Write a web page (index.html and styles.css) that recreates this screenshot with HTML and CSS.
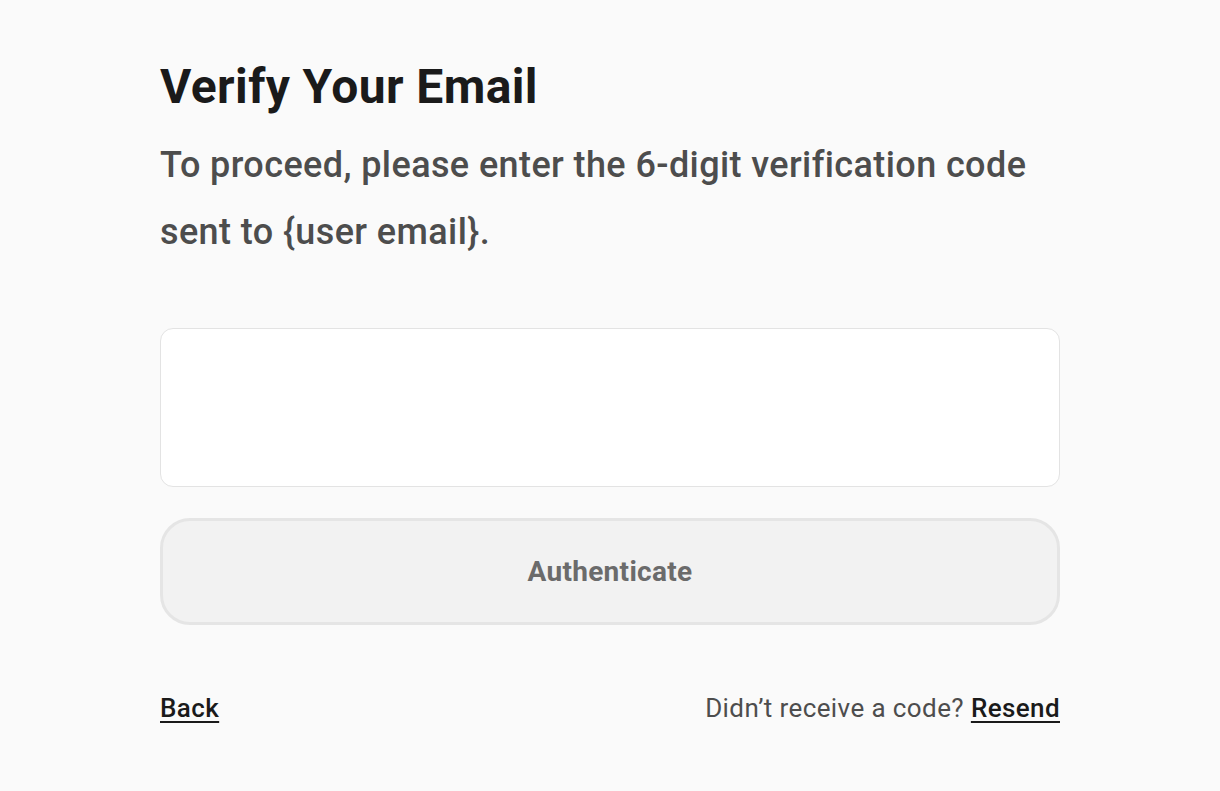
FILE: index.html
```html
<!DOCTYPE html>
<html lang="en">
<head>
<meta charset="utf-8">
<title>Verify Your Email</title>
<link rel="stylesheet" href="styles.css">
</head>
<body>
<main class="page">
  <h1 class="title">Verify Your Email</h1>
  <p class="lead">To proceed, please enter the 6-digit verification code sent to {user email}.</p>
  <form class="form">
    <input class="code-input" type="text" inputmode="numeric" aria-label="Verification code">
    <button class="submit" type="button">Authenticate</button>
  </form>
  <div class="footer">
    <a class="link" href="#">Back</a>
    <span class="resend">Didn’t receive a code? <a class="link" href="#">Resend</a></span>
  </div>
</main>
</body>
</html>
```

FILE: styles.css
```css
html, body {
  margin: 0;
  padding: 0;
  background: #fafafa;
}
body {
  font-family: Roboto, "Liberation Sans", Arial, sans-serif;
  color: #1a1a1a;
  letter-spacing: 0.4px;
}
.page {
  width: 900px;
  margin: 0 auto;
  padding-top: 57px;
  box-sizing: border-box;
}
.title {
  margin: 0;
  font-size: 48px;
  font-weight: 700;
  line-height: 60px;
  color: #1a1a1a;
}
.lead {
  margin: 0;
  padding-top: 15px;
  font-size: 36px;
  font-weight: 500;
  line-height: 67px;
  color: #4d4d4d;
}
.form {
  display: flex;
  flex-direction: column;
  gap: 31px;
  margin-top: 62px;
}
.code-input {
  box-sizing: border-box;
  height: 159px;
  width: 100%;
  background: #ffffff;
  border: 1.5px solid #e3e3e3;
  border-radius: 13px;
  outline: none;
  font: inherit;
}
.submit {
  box-sizing: border-box;
  height: 107px;
  width: 100%;
  background: #f2f2f2;
  border: 3px solid #e5e5e5;
  border-radius: 30px;
  font-family: inherit;
  font-size: 28px;
  font-weight: 700;
  letter-spacing: 0.3px;
  color: #6b6b6b;
}
.footer {
  display: flex;
  justify-content: space-between;
  align-items: baseline;
  margin-top: 68px;
  font-size: 26px;
  line-height: 30px;
}
.resend {
  color: #4d4d4d;
}
.link {
  color: #1a1a1a;
  font-weight: 500;
  text-decoration: underline;
  text-underline-offset: 4px;
  text-decoration-thickness: 2px;
}
```
